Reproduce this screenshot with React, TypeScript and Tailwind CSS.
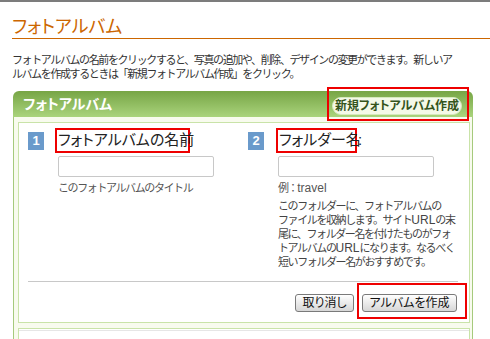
import React from 'react';

const jp = "font-['Liberation_Sans','Noto_Sans_CJK_JP',sans-serif]";
const palt = "[font-feature-settings:'palt']";
const body = 'text-[11px] leading-[14px] tracking-[-1.4px]';

function Latin({ children }: { children: React.ReactNode }) {
  return <span className="text-[12px] tracking-normal">{children}</span>;
}

function StepBadge({ n }: { n: number }) {
  return (
    <span className="flex h-[18px] w-[16px] shrink-0 items-center justify-center bg-[#6a9acb] text-[13px] font-bold leading-none text-white">
      {n}
    </span>
  );
}

function GrayButton({ children, width }: { children: React.ReactNode; width: string }) {
  return (
    <button
      className={`${width} flex h-[18px] items-center justify-center rounded-[3px] border border-[#7a7a7a] bg-gradient-to-b from-white to-[#d6d6d6] text-[12px] leading-none text-[#111] ${palt}`}
    >
      {children}
    </button>
  );
}

export default function App() {
  return (
    <div className={`h-[339px] w-[490px] overflow-hidden border-t-2 border-[#7c7c7c] bg-white ${jp}`}>
      <div className="pl-[12px] pt-[15px]">
        <h1 className={`border-b border-[#cc6600] text-[18px] leading-[21px] text-[#cc6600] ${palt}`}>フォトアルバム</h1>
      </div>

      <p className={`ml-[12px] mt-[14px] whitespace-nowrap text-[#333] ${body}`}>
        フォトアルバムの名前をクリックすると、写真の追加や、削除、デザインの変更ができます。新しいア
        <br />
        ルバムを作成するときは「新規フォトアルバム作成」をクリック。
      </p>

      <div className="ml-[13px] mt-[10px] w-[460px]">
        <div className="flex h-[26px] items-center justify-between rounded-t-[6px] bg-gradient-to-b from-[#77a545] to-[#aad47c] pl-[10px] pr-[11px]">
          <span className={`text-[14px] font-bold text-white ${palt}`}>フォトアルバム</span>
          <div className="relative mt-[4px]">
            <button className={`flex h-[18px] w-[130px] items-center justify-center rounded-full border border-[#d6e8bd] bg-[#f4f9e8] text-[12px] font-bold leading-none text-[#34541c] ${palt}`}>
              新規フォトアルバム作成
            </button>
            <div className="pointer-events-none absolute bottom-[-6px] left-[-5px] right-[-7px] top-[-10px] border-2 border-[#ee0000]" />
          </div>
        </div>

        <div className="border-x border-[#a6ca7c] bg-[#f8fbee] pl-[4px] pr-[2px] pt-[5px]">
          <div className="h-[201px] border border-[#c9e3a8] bg-white pl-[9px] pr-[11px] pt-[5px]">
            <div className="grid grid-cols-[220px_1fr]">
              <div>
                <div className="flex items-center">
                  <StepBadge n={1} />
                  <span className={`ml-[11px] flex h-[25px] w-[135px] items-center whitespace-nowrap border-2 border-[#ee0000] pl-[1px] text-[15px] text-[#222] ${palt}`}>
                    フォトアルバムの名前
                  </span>
                </div>
                <input className="ml-[30px] mt-[3px] block h-[21px] w-[156px] rounded-[2px] border border-[#c8c8c8] bg-white" />
                <p className={`ml-[30px] mt-[4px] text-[#555] ${body}`}>このフォトアルバムのタイトル</p>
              </div>
              <div>
                <div className="flex items-center">
                  <StepBadge n={2} />
                  <span className={`ml-[12px] flex h-[25px] w-[81px] items-center whitespace-nowrap border-2 border-[#ee0000] pl-[1px] text-[15px] text-[#222] ${palt}`}>
                    フォルダー名
                  </span>
                  <span className="ml-[1px] text-[15px] text-[#222]">:</span>
                </div>
                <input className="ml-[30px] mt-[3px] block h-[21px] w-[156px] rounded-[2px] border border-[#c8c8c8] bg-white" />
                <p className={`ml-[30px] mt-[4px] text-[#555] ${body}`}>
                  例：<Latin>travel</Latin>
                </p>
                <p className={`ml-[30px] mt-[4px] whitespace-nowrap text-[#444] ${body}`}>
                  このフォルダーに、フォトアルバムの
                  <br />
                  ファイルを収納します。サイト<Latin>URL</Latin>の末
                  <br />
                  尾に、フォルダー名を付けたものがフォ
                  <br />
                  トアルバムの<Latin>URL</Latin>になります。なるべく
                  <br />
                  短いフォルダー名がおすすめです。
                </p>
              </div>
            </div>

            <div className="mt-[12px] h-px bg-[#c8c8c8]" />

            <div className="mt-[12px] flex justify-end gap-[8px] pr-[1px]">
              <GrayButton width="w-[59px]">取り消し</GrayButton>
              <div className="relative">
                <GrayButton width="w-[95px]">アルバムを作成</GrayButton>
                <div className="pointer-events-none absolute bottom-[-7px] left-[-5px] right-[-10px] top-[-11px] border-2 border-[#ee0000]" />
              </div>
            </div>
          </div>

          <div className="mt-[5px] h-[30px] border border-[#c9e3a8] bg-white">
            <div className="mt-[1px] h-px bg-[#e6e6e6]" />
          </div>
        </div>
      </div>
    </div>
  );
}
